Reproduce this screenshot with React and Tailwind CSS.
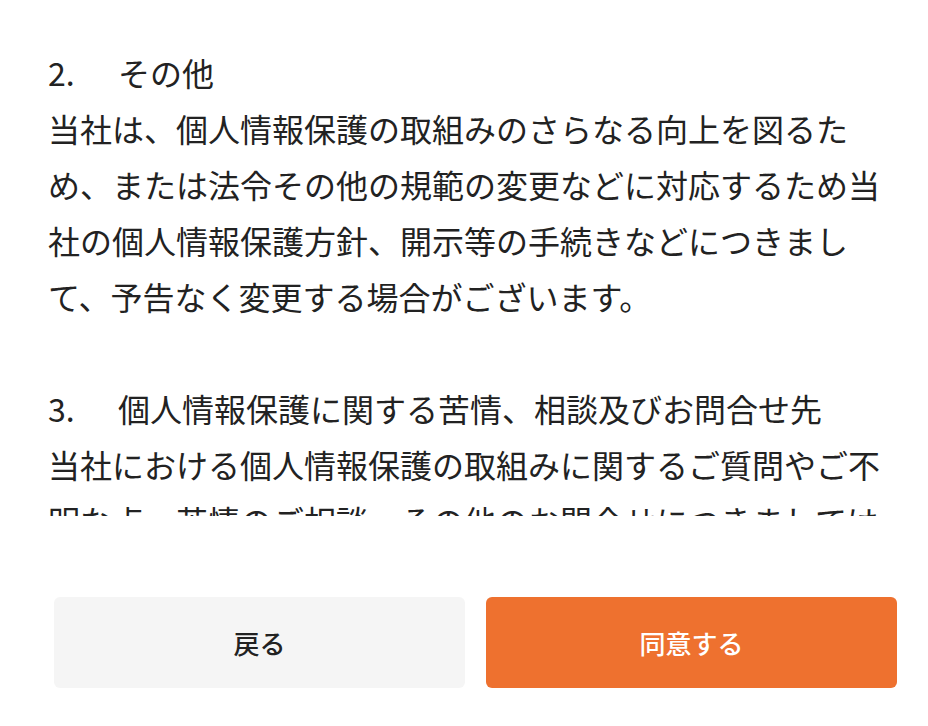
import React from 'react';

const sections = [
    {
        no: '2.',
        title: 'その他',
        body: '当社は、個人情報保護の取組みのさらなる向上を図るため、または法令その他の規範の変更などに対応するため当社の個人情報保護方針、開示等の手続きなどにつきまして、予告なく変更する場合がございます。',
    },
    {
        no: '3.',
        title: '個人情報保護に関する苦情、相談及びお問合せ先',
        body: '当社における個人情報保護の取組みに関するご質問やご不明な点、苦情のご相談、その他のお問合せにつきましては下記の窓口までご連絡ください。',
    },
];

const App = () => {
    return (
        <div
            className="h-screen w-full bg-white flex flex-col text-[#222222]"
            style={{ fontFamily: '"Noto Sans CJK JP", "Noto Sans", sans-serif' }}
        >
            <div className="h-[516px] overflow-hidden shrink-0">
                <div className="pt-[44px] px-12 text-[32px] leading-[56px]">
                    {sections.map((s, i) => (
                        <div key={s.no} className={i > 0 ? 'mt-[56px]' : ''}>
                            <div>
                                <span className="inline-block w-[70px]">{s.no}</span>
                                {s.title}
                            </div>
                            <p>{s.body}</p>
                        </div>
                    ))}
                </div>
            </div>

            {/* Buttons */}
            <div className="flex gap-[21px] pt-[81px] pl-[54px] pr-[31px]">
                <button className="flex-1 h-[91px] rounded-md bg-[#f5f5f5] text-[26px] font-medium text-[#222222]">
                    戻る
                </button>
                <button className="flex-1 h-[91px] rounded-md bg-[#ee712f] text-[26px] font-medium text-white">
                    同意する
                </button>
            </div>
        </div>
    );
};

export default App;
